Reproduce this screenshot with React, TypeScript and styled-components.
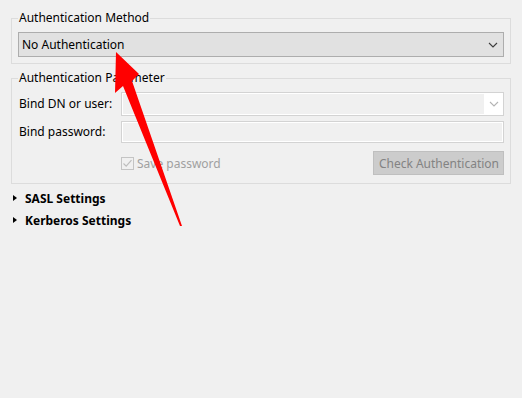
import React from 'react';
import { styled, createGlobalStyle } from 'styled-components';

const GlobalStyle = createGlobalStyle`
  html, body {
    margin: 0;
    padding: 0;
    background: #f0f0f0;
  }
  body {
    font-family: 'Noto Sans', 'Liberation Sans', sans-serif;
    font-size: 12px;
    color: #000000;
  }
`;

const Page = styled.div`
  position: relative;
  width: 522px;
  height: 398px;
  box-sizing: border-box;
  padding: 10px 11px 0 11px;
  display: flex;
  flex-direction: column;
  overflow: hidden;
`;

const Group = styled.fieldset<{ $gapTop?: number; $padBottom?: number }>`
  margin: ${(p) => p.$gapTop ?? 0}px 0 0 0;
  padding: 6px 6px ${(p) => p.$padBottom ?? 6}px 6px;
  border: 1px solid #dcdcdc;
  min-width: 0;
`;

const Legend = styled.legend`
  padding: 0 1px;
  margin: 0;
  line-height: 16px;
  font-size: 12px;
  color: #000000;
`;

const Combo = styled.div`
  height: 25px;
  box-sizing: border-box;
  border: 1px solid #adadad;
  background: #e1e1e1;
  display: flex;
  align-items: center;
  justify-content: space-between;
  padding: 0 5px 0 3px;
`;

const Form = styled.div`
  display: grid;
  grid-template-columns: 103px 1fr;
  grid-auto-rows: auto;
  row-gap: 5px;
  align-items: center;
`;

const Label = styled.label`
  padding-left: 1px;
  line-height: 16px;
`;

const EditCombo = styled.div`
  height: 24px;
  box-sizing: border-box;
  border: 1px solid #d3d3d3;
  background: #ffffff;
  display: flex;
  align-items: stretch;
  padding: 1px 0 1px 1px;
`;

const EditField = styled.div`
  flex: 1;
  background: #f0f0f0;
`;

const DropZone = styled.div`
  width: 19px;
  display: flex;
  align-items: center;
  justify-content: center;
`;

const TextField = styled.div`
  height: 22px;
  box-sizing: border-box;
  border: 1px solid #d3d3d3;
  box-shadow: inset 0 0 0 1px #ffffff;
  background: #f0f0f0;
`;

const ActionRow = styled.div`
  grid-column: 2;
  display: flex;
  align-items: center;
  justify-content: space-between;
  margin-top: 3px;
`;

const CheckWrap = styled.div`
  display: flex;
  align-items: center;
  gap: 3px;
  color: #a0a0a0;
`;

const CheckBox = styled.span`
  width: 13px;
  height: 13px;
  box-sizing: border-box;
  border: 1px solid #c4c4c4;
  display: flex;
  align-items: center;
  justify-content: center;
`;

const Button = styled.div`
  height: 24px;
  box-sizing: border-box;
  border: 1px solid #bfbfbf;
  background: #cccccc;
  color: #838383;
  padding: 0 4px 0 5px;
  display: flex;
  align-items: center;
  font-size: 12px;
`;

const Section = styled.div`
  display: flex;
  align-items: center;
  height: 22px;
  font-weight: 700;
  gap: 8px;
  padding-left: 2px;
`;

const Caret = styled.span`
  width: 0;
  height: 0;
  border-top: 3.5px solid transparent;
  border-bottom: 3.5px solid transparent;
  border-left: 4px solid #000000;
`;

const Sections = styled.div`
  margin-top: 3px;
  display: flex;
  flex-direction: column;
`;

const Overlay = styled.svg`
  position: absolute;
  left: 0;
  top: 0;
  pointer-events: none;
`;

const Chevron: React.FC<{ color: string }> = ({ color }) => (
  <svg width="10" height="6" viewBox="0 0 10 6">
    <path d="M1 1 L5 5 L9 1" fill="none" stroke={color} strokeWidth="1.1" />
  </svg>
);

const App: React.FC = () => {
  return (
    <>
      <GlobalStyle />
      <Page>
        <Group>
          <Legend>Authentication Method</Legend>
          <Combo>
            <span>No Authentication</span>
            <Chevron color="#3c3c3c" />
          </Combo>
        </Group>

        <Group $gapTop={6} $padBottom={8}>
          <Legend>Authentication Parameter</Legend>
          <Form>
            <Label>Bind DN or user:</Label>
            <EditCombo>
              <EditField />
              <DropZone>
                <Chevron color="#b4b4b4" />
              </DropZone>
            </EditCombo>
            <Label>Bind password:</Label>
            <TextField />
            <ActionRow>
              <CheckWrap>
                <CheckBox>
                  <svg width="11" height="11" viewBox="0 0 11 11">
                    <path d="M1.5 5.5 L4.2 8.2 L9.5 2.2" fill="none" stroke="#bdbdbd" strokeWidth="1.2" />
                  </svg>
                </CheckBox>
                <span>Save password</span>
              </CheckWrap>
              <Button>Check Authentication</Button>
            </ActionRow>
          </Form>
        </Group>

        <Sections>
          <Section>
            <Caret />
            <span>SASL Settings</span>
          </Section>
          <Section>
            <Caret />
            <span>Kerberos Settings</span>
          </Section>
        </Sections>

        {/* red annotation arrow drawn over the dialog */}
        <Overlay width="522" height="398" viewBox="0 0 522 398">
          <polygon
            points="116,52 139,74 132,81 182,226 180,226 123,86 115,93"
            fill="#ff0000"
          />
        </Overlay>
      </Page>
    </>
  );
};

export default App;
